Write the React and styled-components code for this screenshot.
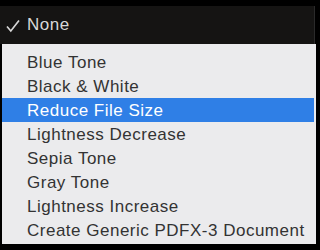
import React from "react";
import { styled, createGlobalStyle } from "styled-components";

const Global = createGlobalStyle`
  html, body {
    margin: 0;
    padding: 0;
    background: #000;
  }
  body {
    width: 320px;
    height: 250px;
    overflow: hidden;
    font-family: "Liberation Sans", Arial, sans-serif;
  }
`;

const items = [
  "Blue Tone",
  "Black & White",
  "Reduce File Size",
  "Lightness Decrease",
  "Sepia Tone",
  "Gray Tone",
  "Lightness Increase",
  "Create Generic PDFX-3 Document",
];

const App = () => {
  return (
    <>
      <Global />
      <Screen>
        <TopBar>
          <Check viewBox="0 0 14 14">
            <path d="M1 7.5 L4.8 12 L13 1.5" />
          </Check>
          <TopLabel>None</TopLabel>
        </TopBar>
        <Menu>
          {items.map((label) => (
            <Item key={label} $active={label === "Reduce File Size"}>
              {label}
            </Item>
          ))}
        </Menu>
      </Screen>
    </>
  );
};

const Screen = styled.div`
  width: 320px;
  height: 250px;
  padding-top: 6px;
  box-sizing: border-box;
  background: #000;
`;

const TopBar = styled.div`
  display: flex;
  align-items: center;
  width: 315px;
  height: 38px;
  background: #151413;
  border-right: 1px solid #2a2a2a;
  box-sizing: border-box;
  padding-left: 6px;
`;

const Check = styled.svg`
  width: 14px;
  height: 14px;
  fill: none;
  stroke: #d6d6d6;
  stroke-width: 1.7;
  margin-right: 7px;
  margin-top: 1px;
`;

const TopLabel = styled.span`
  font-size: 17px;
  letter-spacing: 0.5px;
  color: #d8d8d8;
`;

const Menu = styled.div`
  display: flex;
  flex-direction: column;
  margin-left: 2px;
  width: 314px;
  background: #ebebed;
  padding: 6px 0 2px;
  box-sizing: border-box;
`;

const Item = styled.div`
  height: 24px;
  line-height: 25px;
  padding-left: 25px;
  font-size: 17px;
  letter-spacing: 0.5px;
  margin-right: 2px;
  color: ${(p) => (p.$active ? "#ffffff" : "#333333")};
  background: ${(p) => (p.$active ? "#2f7fe6" : "transparent")};
`;

export default App;
